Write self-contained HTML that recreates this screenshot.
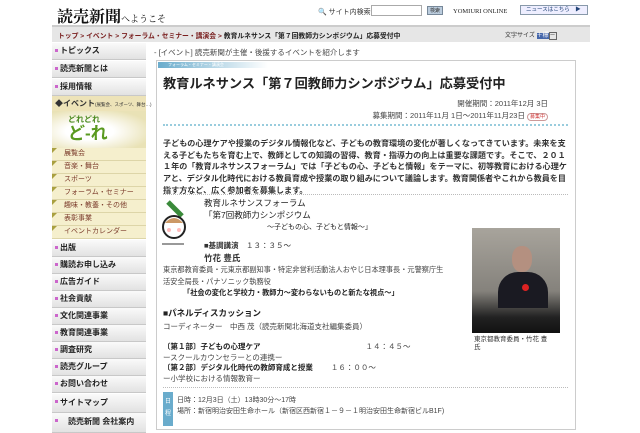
<!DOCTYPE html>
<html><head><meta charset="utf-8"><style>
*{margin:0;padding:0;box-sizing:border-box}
body{width:640px;height:426px;overflow:hidden;background:#fff;font-family:"Liberation Sans","Noto Sans CJK JP",sans-serif;color:#333;position:relative}
.a{position:absolute;white-space:nowrap}
.m{position:absolute;left:52px;width:94px;height:17px;background:linear-gradient(#fafafa,#e2e2e2);border-bottom:1px solid #c8c8c8;font-size:8px;font-weight:bold;line-height:16px;padding-left:8px;color:#222}
.m:before{content:"";position:absolute;left:3px;top:6px;width:3px;height:3px;background:#c6c}
.sub{position:absolute;left:52px;width:94px;height:13px;background:#f5efcd;border-bottom:1px solid #ddd5a8;font-size:7px;line-height:12px;padding-left:12px;color:#7a3a2a}
.sub:before{content:"";position:absolute;left:0;top:0;border-top:5px solid #a9a040;border-right:5px solid transparent}
.p{font-size:8.1px;font-weight:bold;line-height:11.7px;color:#333}
</style></head><body>
<div class="a" style="left:57px;top:4px;font-size:16px;font-weight:bold;color:#111;font-family:'Liberation Serif','Noto Serif CJK SC',serif">読売新聞<span style="font-size:9px;font-weight:normal">へようこそ</span></div>
<div class="a" style="left:318px;top:7px;font-size:7px">🔍 サイト内検索</div>
<div class="a" style="left:371px;top:5px;width:51px;height:11px;border:1px solid #aaa"></div>
<div class="a" style="left:427px;top:6px;width:16px;height:9px;background:#bcd;border:1px solid #789;font-size:5px;text-align:center">検索</div>
<div class="a" style="left:453px;top:8px;font-size:6.5px;font-family:'Liberation Serif',serif;color:#222">YOMIURI ONLINE</div>
<div class="a" style="left:520px;top:5px;width:68px;height:10px;border:1px solid #89a;background:#eef;font-size:5.5px;line-height:9px;padding-left:5px;color:#247">ニュースはこちら　▶</div>
<div class="a" style="left:52px;top:25px;width:538px;height:17px;background:#e6e6e6;border-top:2px solid #ccc"></div>
<div class="a" style="left:58px;top:30px;font-size:6.8px;color:#7a2020;font-weight:bold">トップ &gt; イベント &gt; フォーラム・セミナー・講演会 &gt; <span style="color:#222">教育ルネサンス「第７回教師力シンポジウム」応募受付中</span></div>
<div class="a" style="left:505px;top:30px;font-size:6px">文字サイズ <span style="background:#46a;color:#fff">＋</span><span style="background:#46a;color:#fff">標</span><span style="border:1px solid #666">－</span></div>
<div class="m" style="top:43px">トピックス</div>
<div class="m" style="top:61px">読売新聞とは</div>
<div class="m" style="top:79px">採用情報</div>
<div class="a" style="left:52px;top:96px;width:94px;height:15px;background:#ede3b8;font-size:8px;font-weight:bold;line-height:15px;padding-left:3px">◆イベント<span style="font-size:4.5px;font-weight:normal">(展覧会、スポーツ、舞台…)</span></div>
<div class="a" style="left:52px;top:111px;width:94px;height:37px;background:radial-gradient(ellipse at 40% 55%,#fff 30%,#e9e2b6 80%)"><div style="position:absolute;left:16px;top:3px;font-size:8px;color:#4a8a20;font-weight:bold">どれどれ</div><div style="position:absolute;left:16px;top:13px;font-size:17px;color:#5a9a20;font-weight:bold;line-height:20px">ど-れ</div></div>
<div class="sub" style="top:148px">展覧会</div>
<div class="sub" style="top:161px">音楽・舞台</div>
<div class="sub" style="top:174px">スポーツ</div>
<div class="sub" style="top:187px">フォーラム・セミナー</div>
<div class="sub" style="top:200px">趣味・教養・その他</div>
<div class="sub" style="top:213px">表彰事業</div>
<div class="sub" style="top:226px">イベントカレンダー</div>
<div class="m" style="top:240px">出版</div>
<div class="m" style="top:257px">購読お申し込み</div>
<div class="m" style="top:274px">広告ガイド</div>
<div class="m" style="top:291px">社会貢献</div>
<div class="m" style="top:308px">文化関連事業</div>
<div class="m" style="top:325px">教育関連事業</div>
<div class="m" style="top:342px">調査研究</div>
<div class="m" style="top:359px">読売グループ</div>
<div class="m" style="top:376px">お問い合わせ</div>
<div class="m" style="top:394px;height:19px;line-height:18px">サイトマップ</div>
<div class="m" style="top:413px;height:20px;padding-left:16px;line-height:18px">読売新聞 会社案内</div>
<div class="a" style="left:154px;top:47px;font-size:7.5px;color:#444">- [イベント] 読売新聞が主催・後援するイベントを紹介します</div>
<div class="a" style="left:156px;top:60px;width:420px;height:370px;border:1px solid #ccc"></div>
<div class="a" style="left:158px;top:62px;width:110px;height:6px;background:linear-gradient(90deg,#6aaccc,#fff);font-size:4px;color:#fff;padding-left:10px;line-height:6px">フォーラム・セミナー・講演会</div>
<div class="a" style="left:163px;top:73px;font-size:13.2px;font-weight:bold;color:#222">教育ルネサンス「第７回教師力シンポジウム」応募受付中</div>
<div class="a" style="right:92px;top:98px;font-size:7.5px;color:#444">開催期間：2011年12月 3日</div>
<div class="a" style="right:92px;top:110px;font-size:7.5px;color:#444">募集期間：2011年11月 1日～2011年11月23日<span style="color:#c33;font-size:5px;border:1px solid #c99;border-radius:4px;padding:0 2px;margin-left:2px">募集中</span></div>
<div class="a" style="left:163px;top:124px;width:405px;border-top:2px dotted #9cd"></div>
<div class="a p" style="left:163px;top:138px">子どもの心理ケアや授業のデジタル情報化など、子どもの教育環境の変化が著しくなってきています。未来を支<br>える子どもたちを育む上で、教師としての知識の習得、教育・指導力の向上は重要な課題です。そこで、２０１<br>１年の「教育ルネサンスフォーラム」では「子どもの心、子どもと情報」をテーマに、初等教育における心理ケ<br>アと、デジタル化時代における教員育成や授業の取り組みについて議論します。教育関係者やこれから教員を目<br>指す方など、広く参加者を募集します。</div>
<div class="a" style="left:163px;top:194px;width:405px;border-top:1px dotted #bbb"></div>
<svg class="a" style="left:160px;top:198px" width="36" height="50"><path d="M8 4 L22 18" stroke="#3a8a3a" stroke-width="5"/><circle cx="14" cy="29" r="11" fill="#fff" stroke="#222" stroke-width="2"/><path d="M5 25 Q14 15 23 25" fill="#c96"/><circle cx="9" cy="32" r="2" fill="#fbb"/><circle cx="19" cy="32" r="2" fill="#fbb"/><rect x="2" y="45" width="22" height="2" fill="#999"/></svg>
<div class="a" style="left:204px;top:198px;font-size:8.5px;line-height:11.5px;color:#222">教育ルネサンスフォーラム<br>「第7回教師力シンポジウム<br><span style="margin-left:63px;font-size:7px">～子どもの心、子どもと情報～」</span></div>
<div class="a" style="left:204px;top:240px;font-size:7.5px;font-weight:bold">■基調講演　<span style="font-weight:normal">１３：３５～</span></div>
<div class="a" style="left:204px;top:252px;font-size:8.5px;font-weight:bold">竹花 豊氏</div>
<div class="a" style="left:163px;top:264px;font-size:7.2px;line-height:11.5px;color:#444">東京都教育委員・元東京都副知事・特定非営利活動法人おやじ日本理事長・元警察庁生<br>活安全局長・パナソニック執務役<br><b style="color:#222;margin-left:20px">「社会の変化と学校力・教師力～変わらないものと新たな視点～」</b></div>
<div class="a" style="left:472px;top:228px;width:88px;height:105px;background:linear-gradient(#a8a49c,#85827c 60%,#222 85%,#111)"><div style="position:absolute;left:40px;top:18px;width:20px;height:26px;border-radius:45%;background:#b49080"></div><div style="position:absolute;left:26px;top:44px;width:50px;height:36px;background:#1a1a22;border-radius:20px 20px 0 0"></div><div style="position:absolute;left:50px;top:56px;width:7px;height:7px;border-radius:50%;background:#d22"></div></div>
<div class="a" style="left:474px;top:336px;font-size:6.5px;line-height:8px;color:#333">東京都教育委員・竹花 豊<br>氏</div>
<div class="a" style="left:163px;top:307px;font-size:8.5px;font-weight:bold;color:#222">■パネルディスカッション</div>
<div class="a" style="left:163px;top:321px;font-size:7.5px;color:#444">コーディネーター　中西 茂（読売新聞北海道支社編集委員）</div>
<div class="a" style="left:163px;top:342px;font-size:7.5px;line-height:10.6px;color:#444"><b style="color:#222">〔第１部〕子どもの心理ケア</b><span style="margin-left:105px">１４：４５～</span><br>ースクールカウンセラーとの連携ー<br><b style="color:#222">〔第２部〕デジタル化時代の教師育成と授業</b><span style="margin-left:18px">１６：００～</span><br>ー小学校における情報教育ー</div>
<div class="a" style="left:163px;top:387px;width:405px;border-top:1px dotted #bbb"></div>
<div class="a" style="left:163px;top:392px;width:10px;height:34px;background:#6aaccc;color:#fff;font-size:6px;text-align:center;line-height:12px;padding-top:4px">日<br>程</div>
<div class="a" style="left:177px;top:395px;font-size:7px;line-height:11px;color:#444">日時：12月3日（土）13時30分～17時<br>場所：新宿明治安田生命ホール（新宿区西新宿１－９－１明治安田生命新宿ビルB1F)</div>
</body></html>
